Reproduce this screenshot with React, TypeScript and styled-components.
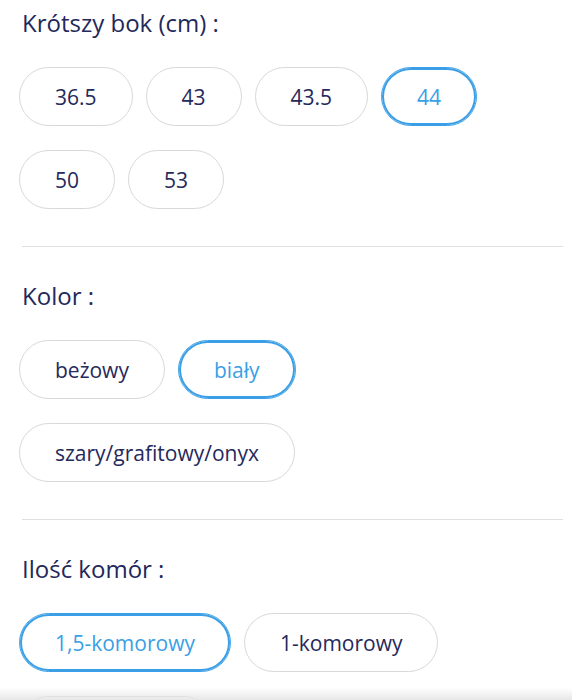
import React, { useState } from "react";
import styled, { createGlobalStyle } from "styled-components";

const GlobalStyle = createGlobalStyle`
  body {
    margin: 0;
    background: #ffffff;
    font-family: "Open Sans", Lato, sans-serif;
    color: #23285b;
  }
`;

const Page = styled.div`
  padding: 8px 9px 0 22px;
`;

const Section = styled.section`
  display: flex;
  flex-direction: column;
`;

const Title = styled.h3`
  margin: 0 0 29px;
  font-size: 24px;
  line-height: 30px;
  font-weight: 400;
  color: #23285b;
`;

const Options = styled.div`
  display: flex;
  flex-wrap: wrap;
  gap: 24px 13px;
  margin-left: -3px;
`;

const Pill = styled.button<{ $active?: boolean }>`
  height: 59px;
  padding: 0 35px;
  border: 1px solid ${(p) => (p.$active ? "#3a9fe6" : "#d8d8d8")};
  box-shadow: ${(p) => (p.$active ? "inset 0 0 0 2px #3a9fe6" : "none")};
  border-radius: 30px;
  background: #ffffff;
  font-family: inherit;
  font-size: 21px;
  font-weight: 400;
  color: ${(p) => (p.$active ? "#3a9fe6" : "#25295b")};
  cursor: pointer;
`;

const Divider = styled.hr`
  margin: 37px 0 34px;
  border: none;
  border-top: 1px solid #e0e0e2;
`;

const BottomShade = styled.div`
  position: fixed;
  left: 0;
  right: 0;
  bottom: 0;
  height: 12px;
  background: linear-gradient(
    to bottom,
    rgba(230, 230, 230, 0),
    rgba(228, 228, 228, 0.9)
  );
  pointer-events: none;
`;

type Group = {
  title: string;
  values: string[];
  initial: string;
};

const groups: Group[] = [
  {
    title: "Krótszy bok (cm) :",
    values: ["36.5", "43", "43.5", "44", "50", "53"],
    initial: "44",
  },
  {
    title: "Kolor :",
    values: ["beżowy", "biały", "szary/grafitowy/onyx"],
    initial: "biały",
  },
  {
    title: "Ilość komór :",
    values: ["1,5-komorowy", "1-komorowy", "2-komorowy"],
    initial: "1,5-komorowy",
  },
];

function OptionGroup({ group }: { group: Group }) {
  const [selected, setSelected] = useState(group.initial);
  return (
    <Section>
      <Title>{group.title}</Title>
      <Options>
        {group.values.map((v) => (
          <Pill key={v} $active={v === selected} onClick={() => setSelected(v)}>
            {v}
          </Pill>
        ))}
      </Options>
    </Section>
  );
}

export default function App() {
  return (
    <>
      <GlobalStyle />
      <Page>
        {groups.map((g, i) => (
          <React.Fragment key={g.title}>
            {i > 0 && <Divider />}
            <OptionGroup group={g} />
          </React.Fragment>
        ))}
      </Page>
      <BottomShade />
    </>
  );
}
